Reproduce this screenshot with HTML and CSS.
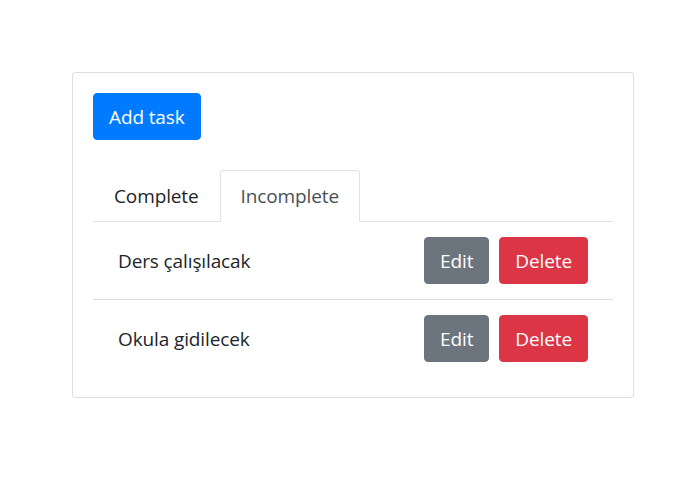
FILE: index.html
```html
<!DOCTYPE html>
<html lang="tr">
<head>
<meta charset="utf-8">
<title>Tasks</title>
<link rel="stylesheet" href="styles.css">
</head>
<body>
<div class="page">
  <div class="card">
    <div class="card-body">
      <button class="btn btn-primary btn-add">Add task</button>
      <ul class="tabs">
        <li class="tab">Complete</li>
        <li class="tab active">Incomplete</li>
      </ul>
      <ul class="list">
        <li class="item">
          <span class="item-text">Ders çalışılacak</span>
          <span class="actions">
            <button class="btn btn-secondary">Edit</button>
            <button class="btn btn-danger">Delete</button>
          </span>
        </li>
        <li class="item">
          <span class="item-text">Okula gidilecek</span>
          <span class="actions">
            <button class="btn btn-secondary">Edit</button>
            <button class="btn btn-danger">Delete</button>
          </span>
        </li>
      </ul>
    </div>
  </div>
</div>
</body>
</html>
```

FILE: styles.css
```css
* { box-sizing: border-box; }
html, body { margin: 0; padding: 0; background: #fff; }
body {
  font-family: "Open Sans", "Noto Sans", sans-serif;
  font-size: 19px;
  line-height: 30px;
  letter-spacing: -0.12px;
  color: #212529;
}
.page { padding: 72px 0 0 72px; }
.card {
  width: 562px;
  border: 1px solid rgba(0,0,0,.125);
  border-radius: 4px;
  background: #fff;
}
.card-body { padding: 20px; }
.btn {
  font-family: inherit;
  font-size: 19px;
  line-height: 30px;
  letter-spacing: inherit;
  padding: 7.5px 15px;
  border: 1px solid transparent;
  border-radius: 4px;
  color: #fff;
  cursor: pointer;
  display: inline-block;
}
.btn-primary { background: #007bff; border-color: #007bff; }
.btn-secondary { background: #6c757d; border-color: #6c757d; }
.btn-danger { background: #dc3545; border-color: #dc3545; }
.btn-add { margin-bottom: 30px; display: block; }
.tabs {
  list-style: none;
  margin: 0;
  padding: 0;
  display: flex;
  border-bottom: 1px solid #dee2e6;
}
.tab {
  padding: 10px 20px;
  border: 1px solid transparent;
  border-radius: 4px 4px 0 0;
  margin-bottom: -1px;
  color: #212529;
}
.tab.active {
  color: #495057;
  border-color: #dee2e6 #dee2e6 #fff;
  background: #fff;
}
.list { list-style: none; margin: 0; padding: 0; }
.item {
  display: flex;
  justify-content: space-between;
  align-items: center;
  padding: 15px 25px;
}
.item + .item { border-top: 1px solid rgba(0,0,0,.125); }
.actions { display: flex; gap: 10px; }
```
